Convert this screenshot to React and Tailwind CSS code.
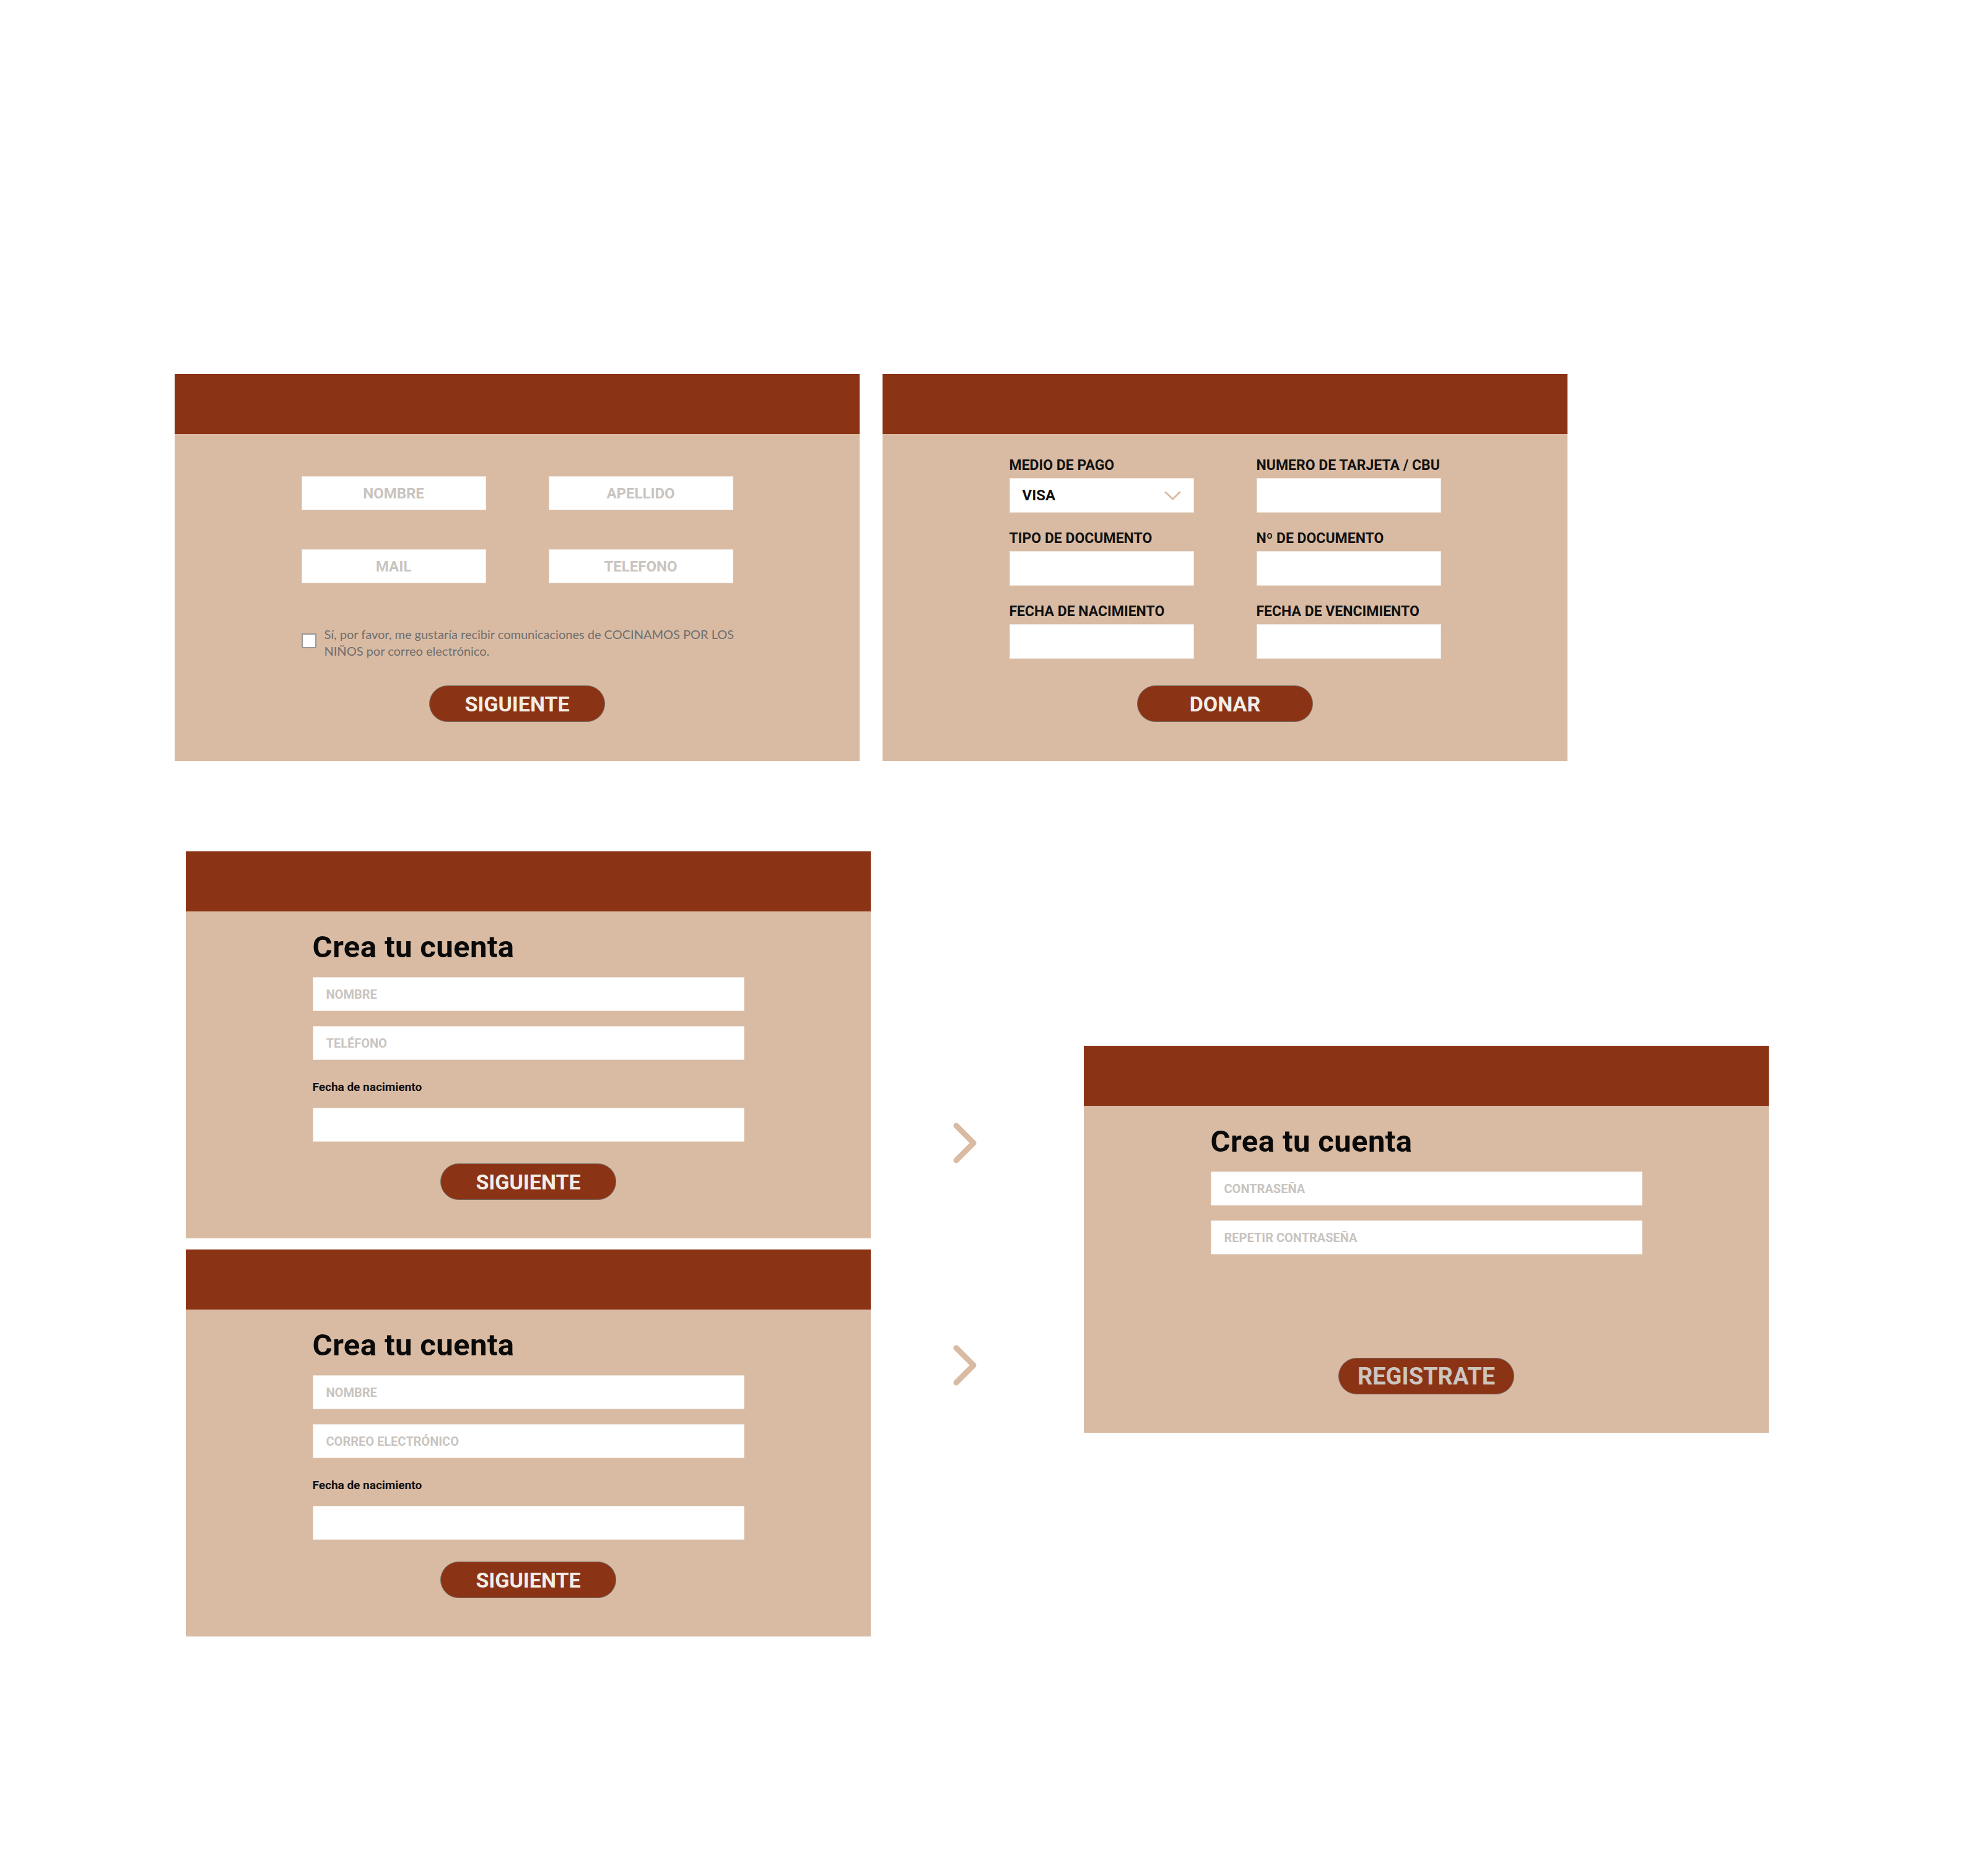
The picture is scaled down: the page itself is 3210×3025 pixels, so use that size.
// Registration / donation form boards: two-step forms on a tan card with brown header strip.

function Panel({ children }) {
  return (
    <div className="w-[1106px] h-[625px] bg-[#d9bba3] flex flex-col shrink-0">
      <div className="h-[97px] bg-[#8b3415] shrink-0" />
      {children}
    </div>
  );
}

function PillButton({ label, light }) {
  return (
    <div
      className={
        light
          ? "mx-auto w-[284px] h-[59px] rounded-full bg-[#8b3415] border border-[#736a64] flex items-center justify-center text-[38px] leading-none font-bold text-[#ccc6c1]"
          : "mx-auto w-[284px] h-[59px] rounded-full bg-[#8b3415] border border-[#736a64] flex items-center justify-center text-[34px] leading-none font-bold text-[#f3ede8]"
      }>
      {label}
    </div>
  );
}

function CenterField({ label }) {
  return (
    <div className="h-[55px] bg-white border border-[#eee5dd] flex items-center justify-center text-[24px] leading-none font-bold text-[#c9c4bf]">
      {label}
    </div>
  );
}

function LeftField({ label, className = "" }) {
  return (
    <div className={`h-[55px] bg-white border border-[#eee5dd] flex items-center pl-[21px] text-[20px] leading-none font-bold text-[#c9c4bf] ${className}`}>
      {label}
    </div>
  );
}

function Labeled({ label, children }) {
  return (
    <div className="flex flex-col">
      <div className="text-[23px] leading-none font-bold text-[#111]">{label}</div>
      <div className="mt-[9px] h-[56px] bg-white border border-[#eee5dd] flex items-center">{children}</div>
    </div>
  );
}

function Chevron() {
  return (
    <svg width="38" height="66" viewBox="0 0 38 66" className="block">
      <polyline points="5,5 33,33 5,61" fill="none" stroke="#d9bba3" strokeWidth="9" strokeLinecap="round" strokeLinejoin="round" />
    </svg>
  );
}

function AccountStep({ second }) {
  return (
    <Panel>
      <div className="w-[697px] mx-auto">
        <div className="mt-[33px] text-[49px] leading-none font-bold tracking-[0.4px] text-[#0a0a0a]">Crea tu cuenta</div>
        <LeftField className="mt-[24px]" label="NOMBRE" />
        <LeftField className="mt-[24px]" label={second ? "CORREO ELECTRÓNICO" : "TELÉFONO"} />
        <div className="mt-[34px] text-[19px] leading-none font-bold text-[#111]">Fecha de nacimiento</div>
        <div className="mt-[24px] h-[55px] bg-white border border-[#eee5dd]" />
        <div className="mt-[35px]">
          <PillButton label="SIGUIENTE" />
        </div>
      </div>
    </Panel>
  );
}

export default function App() {
  return (
    <div className="w-[3210px] h-[3025px] bg-white overflow-hidden font-['Roboto',sans-serif]">
      {/* Row 1 — contact step + payment step */}
      <div className="pt-[604px] pl-[282px] flex gap-[37px]">
        <Panel>
          <div className="w-[697px] mx-auto mt-[68px]">
            <div className="grid grid-cols-2 gap-x-[101px] gap-y-[63px]">
              <CenterField label="NOMBRE" />
              <CenterField label="APELLIDO" />
              <CenterField label="MAIL" />
              <CenterField label="TELEFONO" />
            </div>
            <div className="mt-[69px] flex items-start gap-[13px]">
              <div className="mt-[12px] w-[24px] h-[24px] bg-white border-2 border-[#9a9896] shrink-0" />
              <div className="whitespace-nowrap font-['Lato',sans-serif] text-[20px] leading-[27px] text-[#6e6e6e]">
                Sí, por favor, me gustaría recibir comunicaciones de COCINAMOS POR LOS
                <br />
                NIÑOS por correo electrónico.
              </div>
            </div>
            <div className="mt-[42px]">
              <PillButton label="SIGUIENTE" />
            </div>
          </div>
        </Panel>

        <Panel>
          <div className="w-[697px] mx-auto mt-[39px]">
            <div className="grid grid-cols-2 gap-x-[101px] gap-y-[30px]">
              <Labeled label="MEDIO DE PAGO">
                <div className="flex-1 flex items-center justify-between pl-[20px] pr-[20px]">
                  <span className="text-[24px] leading-none font-bold text-[#111]">VISA</span>
                  <svg width="27" height="15" viewBox="0 0 27 15">
                    <polyline points="2,2 13.5,13 25,2" fill="none" stroke="#d9bba3" strokeWidth="3" strokeLinecap="round" strokeLinejoin="round" />
                  </svg>
                </div>
              </Labeled>
              <Labeled label="NUMERO DE TARJETA / CBU" />
              <Labeled label="TIPO DE DOCUMENTO" />
              <Labeled label="Nº DE DOCUMENTO" />
              <Labeled label="FECHA DE NACIMIENTO" />
              <Labeled label="FECHA DE VENCIMIENTO" />
            </div>
            <div className="mt-[43px]">
              <PillButton label="DONAR" />
            </div>
          </div>
        </Panel>
      </div>

      {/* Row 2 — account creation flow */}
      <div className="mt-[146px] flex items-start">
        <div className="ml-[300px] flex flex-col gap-[18px]">
          <AccountStep />
          <AccountStep second />
        </div>
        <div className="ml-[133px] pt-[438px] flex flex-col gap-[293px]">
          <Chevron />
          <Chevron />
        </div>
        <div className="ml-[173px] mt-[314px]">
          <Panel>
            <div className="w-[697px] mx-auto">
              <div className="mt-[33px] text-[49px] leading-none font-bold tracking-[0.4px] text-[#0a0a0a]">Crea tu cuenta</div>
              <LeftField className="mt-[24px]" label="CONTRASEÑA" />
              <LeftField className="mt-[24px]" label="REPETIR CONTRASEÑA" />
              <div className="mt-[167px]">
                <PillButton label="REGISTRATE" light />
              </div>
            </div>
          </Panel>
        </div>
      </div>
    </div>
  );
}
